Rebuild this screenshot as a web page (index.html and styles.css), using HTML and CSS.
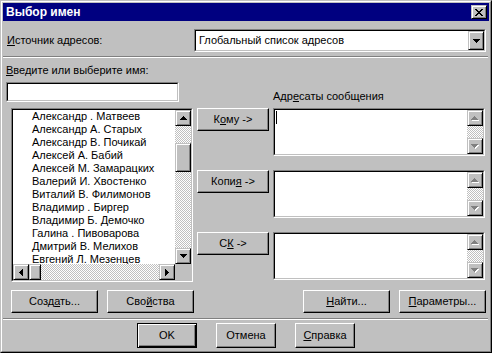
FILE: index.html
```html
<!DOCTYPE html>
<html lang="ru">
<head>
    <meta charset="UTF-8">
    <title>Выбор имен</title>
    <link rel="stylesheet" href="styles.css">
</head>
<body>
    <div class="window">
        <div class="frame">
            <!-- Заголовок окна -->
            <div class="titlebar">
                <span class="title">Выбор имен</span>
                <div class="sb-btn close-btn">
                    <svg width="8" height="7" viewBox="0 0 8 7"><path d="M0 0h2v1h-2zM6 0h2v1h-2zM1 1h2v1h-2zM5 1h2v1h-2zM2 2h4v1h-4zM3 3h2v1h-2zM2 4h4v1h-4zM1 5h2v1h-2zM5 5h2v1h-2zM0 6h2v1h-2zM6 6h2v1h-2z" fill="#000"/></svg>
                </div>
            </div>

            <!-- Источник адресов -->
            <div class="source-row">
                <span class="label"><u>И</u>сточник адресов:</span>
                <div class="field combo">
                    <div class="field-inner combo-inner">
                        <span class="combo-text">Глобальный список адресов</span>
                        <div class="sb-btn combo-btn">
                            <svg width="7" height="4" viewBox="0 0 7 4"><path d="M0 0h7v1h-7zM1 1h5v1h-5zM2 2h3v1h-3zM3 3h1v1h-1z" fill="#000"/></svg>
                        </div>
                    </div>
                </div>
            </div>
            <div class="separator"></div>

            <!-- Выбор имен и адресатов -->
            <div class="picker">
                <div class="name-input">
                    <span class="label"><u>В</u>ведите или выберите имя:</span>
                    <div class="field input-box"><div class="field-inner"></div></div>
                </div>
                <span class="label rcpt-label">Адр<u>е</u>саты сообщения</span>

                <div class="field names-list">
                    <div class="field-inner list-grid">
                        <ul class="names">
                            <li>Александр . Матвеев</li>
                            <li>Александр А. Старых</li>
                            <li>Александр В. Почикай</li>
                            <li>Алексей А. Бабий</li>
                            <li>Алексей М. Замарацких</li>
                            <li>Валерий И. Хвостенко</li>
                            <li>Виталий В. Филимонов</li>
                            <li>Владимир . Биргер</li>
                            <li>Владимир Б. Демочко</li>
                            <li>Галина . Пивоварова</li>
                            <li>Дмитрий В. Мелихов</li>
                            <li>Евгений Л. Мезенцев</li>
                        </ul>
                        <div class="vscroll">
                            <div class="sb-btn"><svg width="7" height="4" viewBox="0 0 7 4"><path d="M3 0h1v1h-1zM2 1h3v1h-3zM1 2h5v1h-5zM0 3h7v1h-7z" fill="#000"/></svg></div>
                            <div class="track track-top"></div>
                            <div class="sb-btn thumb-v"></div>
                            <div class="track"></div>
                            <div class="sb-btn"><svg width="7" height="4" viewBox="0 0 7 4"><path d="M0 0h7v1h-7zM1 1h5v1h-5zM2 2h3v1h-3zM3 3h1v1h-1z" fill="#000"/></svg></div>
                        </div>
                        <div class="hscroll">
                            <div class="sb-btn"><svg width="4" height="7" viewBox="0 0 4 7"><path d="M3 0h1v7h-1zM2 1h1v5h-1zM1 2h1v3h-1zM0 3h1v1h-1z" fill="#000"/></svg></div>
                            <div class="sb-btn thumb-h"></div>
                            <div class="track"></div>
                            <div class="sb-btn"><svg width="4" height="7" viewBox="0 0 4 7"><path d="M0 0h1v7h-1zM1 1h1v5h-1zM2 2h1v3h-1zM3 3h1v1h-1z" fill="#000"/></svg></div>
                        </div>
                        <div class="corner"></div>
                    </div>
                </div>

                <div class="to-buttons">
                    <div class="btn"><span>К<u>о</u>му -&gt;</span></div>
                    <div class="btn"><span>Копи<u>я</u> -&gt;</span></div>
                    <div class="btn"><span>С<u>К</u> -&gt;</span></div>
                </div>

                <div class="rcpt-boxes">
                    <div class="field rcpt">
                        <div class="field-inner rcpt-inner">
                            <div class="rcpt-text"><span class="caret"></span></div>
                            <div class="vscroll">
                                <div class="sb-btn"><svg width="8" height="5" viewBox="0 0 8 5"><path d="M4 1h1v1h-1zM3 2h3v1h-3zM2 3h5v1h-5zM1 4h7v1h-7z" fill="#fff"/><path d="M3 0h1v1h-1zM2 1h3v1h-3zM1 2h5v1h-5zM0 3h7v1h-7z" fill="#808080"/></svg></div>
                                <div class="track"></div>
                                <div class="sb-btn"><svg width="8" height="5" viewBox="0 0 8 5"><path d="M1 1h7v1h-7zM2 2h5v1h-5zM3 3h3v1h-3zM4 4h1v1h-1z" fill="#fff"/><path d="M0 0h7v1h-7zM1 1h5v1h-5zM2 2h3v1h-3zM3 3h1v1h-1z" fill="#808080"/></svg></div>
                            </div>
                        </div>
                    </div>
                    <div class="field rcpt">
                        <div class="field-inner rcpt-inner">
                            <div class="rcpt-text"></div>
                            <div class="vscroll">
                                <div class="sb-btn"><svg width="8" height="5" viewBox="0 0 8 5"><path d="M4 1h1v1h-1zM3 2h3v1h-3zM2 3h5v1h-5zM1 4h7v1h-7z" fill="#fff"/><path d="M3 0h1v1h-1zM2 1h3v1h-3zM1 2h5v1h-5zM0 3h7v1h-7z" fill="#808080"/></svg></div>
                                <div class="track"></div>
                                <div class="sb-btn"><svg width="8" height="5" viewBox="0 0 8 5"><path d="M1 1h7v1h-7zM2 2h5v1h-5zM3 3h3v1h-3zM4 4h1v1h-1z" fill="#fff"/><path d="M0 0h7v1h-7zM1 1h5v1h-5zM2 2h3v1h-3zM3 3h1v1h-1z" fill="#808080"/></svg></div>
                            </div>
                        </div>
                    </div>
                    <div class="field rcpt">
                        <div class="field-inner rcpt-inner">
                            <div class="rcpt-text"></div>
                            <div class="vscroll">
                                <div class="sb-btn"><svg width="8" height="5" viewBox="0 0 8 5"><path d="M4 1h1v1h-1zM3 2h3v1h-3zM2 3h5v1h-5zM1 4h7v1h-7z" fill="#fff"/><path d="M3 0h1v1h-1zM2 1h3v1h-3zM1 2h5v1h-5zM0 3h7v1h-7z" fill="#808080"/></svg></div>
                                <div class="track"></div>
                                <div class="sb-btn"><svg width="8" height="5" viewBox="0 0 8 5"><path d="M1 1h7v1h-7zM2 2h5v1h-5zM3 3h3v1h-3zM4 4h1v1h-1z" fill="#fff"/><path d="M0 0h7v1h-7zM1 1h5v1h-5zM2 2h3v1h-3zM3 3h1v1h-1z" fill="#808080"/></svg></div>
                            </div>
                        </div>
                    </div>
                </div>
            </div>

            <!-- Кнопки списка -->
            <div class="action-row">
                <div class="btn-group">
                    <div class="btn wide"><span>Созд<u>а</u>ть...</span></div>
                    <div class="btn wide"><span>Сво<u>й</u>ства</span></div>
                </div>
                <div class="btn-group">
                    <div class="btn wide"><span><u>Н</u>айти...</span></div>
                    <div class="btn wide"><span><u>П</u>араметры...</span></div>
                </div>
            </div>
            <div class="separator bottom-sep"></div>

            <!-- Кнопки диалога -->
            <div class="dialog-row">
                <div class="btn dlg default">OK</div>
                <div class="btn dlg">Отмена</div>
                <div class="btn dlg"><span><u>С</u>правка</span></div>
            </div>
        </div>
    </div>
</body>
</html>
```

FILE: styles.css
```css
body {
    margin: 0;
    font-family: "Liberation Sans", Arial, sans-serif;
    font-size: 11px;
    line-height: 13px;
    color: #000;
    background: #c0c0c0;
}
.window {
    box-sizing: border-box;
    width: 492px;
    height: 353px;
    border: 1px solid;
    border-color: #c0c0c0 #000 #000 #c0c0c0;
    background: #c0c0c0;
}
.frame {
    box-sizing: border-box;
    height: 100%;
    padding: 1px;
    border: 1px solid;
    border-color: #fff #808080 #808080 #fff;
}
.titlebar {
    height: 18px;
    background: #000080;
    display: flex;
    align-items: center;
    justify-content: space-between;
    padding: 0 2px 0 3px;
}
.title {
    color: #fff;
    font-weight: bold;
    font-size: 12px;
}
u {
    text-decoration: underline;
    text-underline-offset: 1px;
}

/* кнопки */
.btn {
    box-sizing: border-box;
    height: 23px;
    display: flex;
    align-items: center;
    justify-content: center;
    background: #c0c0c0;
    border: 1px solid;
    border-color: #fff #000 #000 #fff;
    box-shadow: inset -1px -1px #808080;
    white-space: nowrap;
}
.sb-btn {
    box-sizing: border-box;
    width: 16px;
    height: 16px;
    display: flex;
    align-items: center;
    justify-content: center;
    background: #c0c0c0;
    border: 1px solid;
    border-color: #c0c0c0 #000 #000 #c0c0c0;
    box-shadow: inset 1px 1px #fff, inset -1px -1px #808080;
    flex: none;
}
.sb-btn svg {
    display: block;
}
.close-btn {
    height: 14px;
}
.track {
    flex: 1;
    background: repeating-conic-gradient(#c0c0c0 0% 25%, #fff 0% 50%) 0 0 / 2px 2px;
}

/* поля */
.field {
    box-sizing: border-box;
    border: 1px solid;
    border-color: #808080 #fff #fff #808080;
}
.field-inner {
    box-sizing: border-box;
    height: 100%;
    border: 1px solid;
    border-color: #000 #c0c0c0 #c0c0c0 #000;
    background: #fff;
}

.source-row {
    display: flex;
    align-items: center;
    justify-content: space-between;
    margin-top: 8px;
    padding: 0 3px 0 4px;
}
.combo {
    width: 292px;
    height: 23px;
}
.combo-inner {
    display: flex;
    align-items: center;
    justify-content: space-between;
    padding-left: 3px;
}
.combo-btn {
    width: 16px;
    height: 19px;
}
.separator {
    border-top: 1px solid #808080;
    border-bottom: 1px solid #fff;
    height: 0;
    margin: 4px 1px 0 0;
}

.picker {
    display: grid;
    grid-template-columns: 190px 72px 212px;
    grid-template-rows: 44px 174px;
    column-gap: 4px;
    margin-top: 6px;
}
.name-input {
    display: flex;
    flex-direction: column;
    padding-left: 3px;
}
.input-box {
    width: 173px;
    height: 20px;
    margin-top: 5px;
}
.rcpt-label {
    grid-column: 3;
    grid-row: 1;
    align-self: end;
    margin-bottom: 5px;
}

.names-list {
    grid-column: 1;
    grid-row: 2;
    margin-left: 8px;
    width: 182px;
    height: 174px;
}
.list-grid {
    display: grid;
    grid-template-columns: 1fr 16px;
    grid-template-rows: 1fr 16px;
    overflow: hidden;
}
.names {
    list-style: none;
    margin: 0;
    padding: 0 0 0 19px;
    overflow: hidden;
    white-space: nowrap;
}
.vscroll {
    display: flex;
    flex-direction: column;
    background: #c0c0c0;
}
.track-top {
    flex: none;
    height: 17px;
}
.thumb-v {
    height: 29px;
}
.hscroll {
    display: flex;
}
.thumb-h {
    width: 12px;
}
.corner {
    background: #c0c0c0;
}

.to-buttons {
    grid-column: 2;
    grid-row: 2;
    display: flex;
    flex-direction: column;
    gap: 39px;
}
.rcpt-boxes {
    grid-column: 3;
    grid-row: 2;
    display: flex;
    flex-direction: column;
    gap: 14px;
}
.rcpt {
    height: 48px;
}
.rcpt-inner {
    display: flex;
}
.rcpt-text {
    flex: 1;
    padding: 1px 0 0 1px;
}
.caret {
    display: block;
    width: 1px;
    height: 13px;
    background: #000;
}

.action-row {
    display: flex;
    justify-content: space-between;
    margin-top: 8px;
    padding: 0 3px 0 8px;
}
.btn-group {
    display: flex;
    gap: 9px;
}
.btn.wide {
    width: 87px;
}
.bottom-sep {
    margin-top: 5px;
}
.dialog-row {
    display: flex;
    justify-content: center;
    gap: 19px;
    margin-top: 3px;
}
.btn.dlg {
    width: 60px;
    height: 25px;
}
.btn.default {
    border-color: #000;
    box-shadow: inset 1px 1px #fff, inset -1px -1px #000, inset -2px -2px #808080;
}
```
